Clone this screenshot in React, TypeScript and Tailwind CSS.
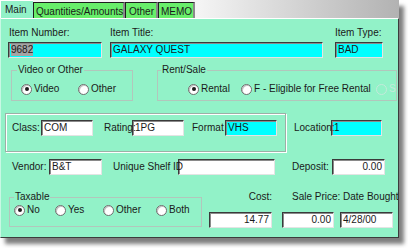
import React from "react";

function Field({ className, children }: { className: string; children?: React.ReactNode }) {
  return (
    <div
      className={
        "box-border h-[16px] shrink-0 border border-t-[#3a3a3a] border-l-[#3a3a3a] border-r-[#e4e4e4] border-b-[#e4e4e4] shadow-[inset_1px_1px_0_#8a8a8a] flex items-center px-[2px] leading-[12px] overflow-hidden whitespace-nowrap " +
        className
      }
    >
      {children}
    </div>
  );
}

function Radio({
  checked,
  disabled,
  label,
  className,
}: {
  checked?: boolean;
  disabled?: boolean;
  label: string;
  className: string;
}) {
  return (
    <div className={"flex items-center shrink-0 whitespace-nowrap " + className}>
      <span
        className={
          "box-border w-[11px] h-[11px] shrink-0 rounded-full border flex items-center justify-center " +
          (disabled
            ? "border-[#c4eadb] bg-transparent"
            : "border-[#6e6e6e] bg-white shadow-[inset_1px_1px_0_#c4c4c4]")
        }
      >
        {checked && <span className="w-[4px] h-[4px] rounded-full bg-[#1c1c1c]" />}
      </span>
      <span className={"ml-[2px] leading-[12px] " + (disabled ? "text-[#c4eadb]" : "")}>{label}</span>
    </div>
  );
}

function Label({ className, children }: { className: string; children: React.ReactNode }) {
  return <span className={"relative z-[1] shrink-0 whitespace-nowrap leading-[12px] " + className}>{children}</span>;
}

export default function App() {
  return (
    <div className="w-[408px] h-[248px] bg-white overflow-hidden font-['Liberation_Sans',Arial,sans-serif] text-[10px] text-[#1a1a1a]">
      <div className="w-[399px] h-[238px] shadow-[5px_6px_4px_rgba(0,0,0,0.5)] flex flex-col">
        {/* tab strip */}
        <div className="h-[18px] flex items-end bg-linear-to-r from-[#f4f4f4] from-50% to-[#b2b2b2]">
          <div className="box-border h-[18px] w-[33px] bg-[#92f2c8] border-l border-t border-white flex items-center pl-[4px]">
            Main
          </div>
          <div className="box-border h-[16px] w-[92px] bg-[#68ee6a] border-l border-t border-[#1e1e1e] border-r-2 border-r-[#8a8a8a] flex items-center pl-[2px] pt-[1px] whitespace-nowrap">
            Quantities/Amounts
          </div>
          <div className="box-border h-[16px] w-[33px] bg-[#68ee6a] border-l border-t border-[#1e1e1e] border-r-2 border-r-[#8a8a8a] flex items-center pl-[3px] pt-[1px]">
            Other
          </div>
          <div className="box-border h-[16px] w-[37px] bg-[#68ee6a] border-l border-t border-[#1e1e1e] border-r-2 border-r-[#8a8a8a] flex items-center pl-[2px] pt-[1px]">
            MEMO
          </div>
        </div>

        {/* panel */}
        <div className="box-border h-[220px] bg-[#92f2c8] border-t border-t-white border-l border-l-[#c8f8e4] border-r border-r-[#3c3c3c] border-b border-b-[#3c3c3c] overflow-hidden flex flex-col">
          {/* Row A */}
          <div className="flex items-start pt-[8px]">
            <div className="ml-[7px] w-[94px] flex flex-col">
              <Label className="pl-[1px]">Item Number:</Label>
              <Field className="mt-[3px] w-[94px] bg-[#00ffff]">
                <span className="bg-[#a4a4a4]">9682</span>
              </Field>
            </div>
            <div className="ml-[8px] w-[213px] flex flex-col">
              <Label className="">Item Title:</Label>
              <Field className="mt-[3px] w-[213px] bg-[#00ffff]">GALAXY QUEST</Field>
            </div>
            <div className="ml-[12px] w-[48px] flex flex-col">
              <Label className="">Item Type:</Label>
              <Field className="mt-[3px] w-[48px] bg-[#00ffff]">BAD</Field>
            </div>
          </div>

          {/* Row B */}
          <div className="flex items-start mt-[6px]">
            <fieldset className="box-border ml-[10px] w-[122px] h-[37px] border border-[#b2c6bc]">
              <legend className="ml-[5px] px-[1px] leading-[12px]">Video or Other</legend>
              <div className="flex items-center pt-[7px]">
                <Radio checked label="Video" className="ml-[9px] w-[57px]" />
                <Radio label="Other" className="" />
              </div>
            </fieldset>
            <fieldset className="box-border ml-[24px] w-[239px] h-[37px] border border-[#b2c6bc]">
              <legend className="ml-[3px] px-[1px] leading-[12px]">Rent/Sale</legend>
              <div className="flex items-center pt-[7px]">
                <Radio checked label="Rental" className="ml-[30px] w-[53px]" />
                <Radio label="F - Eligible for Free Rental" className="w-[135px]" />
                <Radio disabled label="S" className="" />
              </div>
            </fieldset>
          </div>

          {/* Row C */}
          <div className="flex items-start mt-[12px]">
            <div className="box-border ml-[4px] w-[281px] h-[39px] pt-[6px] border border-[#9cb0a6] shadow-[inset_1px_1px_0_#ffffff,1px_1px_0_#ffffff] flex items-start">
              <div className="flex items-center">
                <Label className="ml-[6px] w-[29px]">Class:</Label>
                <Field className="w-[52px] bg-white">COM</Field>
                <Label className="ml-[11px] w-[28px]">Rating:</Label>
                <Field className="w-[52px] bg-white">1PG</Field>
                <Label className="ml-[8px] w-[33px]">Format</Label>
                <Field className="w-[52px] bg-[#00ffff]">VHS</Field>
              </div>
            </div>
            <div className="flex items-center mt-[7px] ml-[8px]">
              <Label className="w-[37px]">Location:</Label>
              <Field className="w-[51px] bg-[#00ffff]">1</Field>
            </div>
          </div>

          {/* Row D */}
          <div className="flex items-center mt-[7px]">
            <Label className="ml-[11px] w-[37px]">Vendor:</Label>
            <Field className="w-[53px] bg-white">B&amp;T</Field>
            <Label className="ml-[11px] w-[65px]">Unique Shelf ID</Label>
            <Field className="w-[97px] bg-white" />
            <Label className="ml-[17px] w-[40px]">Deposit:</Label>
            <Field className="w-[53px] bg-white justify-end">0.00</Field>
          </div>

          {/* Row E */}
          <div className="flex items-start mt-[16px]">
            <fieldset className="box-border ml-[8px] w-[193px] h-[36px] border border-[#b2c6bc]">
              <legend className="ml-[4px] px-[1px] leading-[12px]">Taxable</legend>
              <div className="flex items-center pt-[1px]">
                <Radio checked label="No" className="ml-[4px] w-[41px]" />
                <Radio label="Yes" className="w-[48px]" />
                <Radio label="Other" className="w-[53px]" />
                <Radio label="Both" className="" />
              </div>
            </fieldset>
            <div className="ml-[7px] w-[63px] flex flex-col">
              <Label className="text-right">Cost:</Label>
              <Field className="mt-[9px] w-[63px] bg-white justify-end">14.77</Field>
            </div>
            <div className="ml-[10px] w-[52px] flex flex-col">
              <Label className="pl-[10px]">Sale Price:</Label>
              <Field className="mt-[9px] w-[52px] bg-white justify-end">0.00</Field>
            </div>
            <div className="ml-[6px] w-[53px] flex flex-col">
              <Label className="pl-[3px]">Date Bought</Label>
              <Field className="mt-[9px] w-[53px] bg-white">4/28/00</Field>
            </div>
          </div>
        </div>
      </div>
    </div>
  );
}
